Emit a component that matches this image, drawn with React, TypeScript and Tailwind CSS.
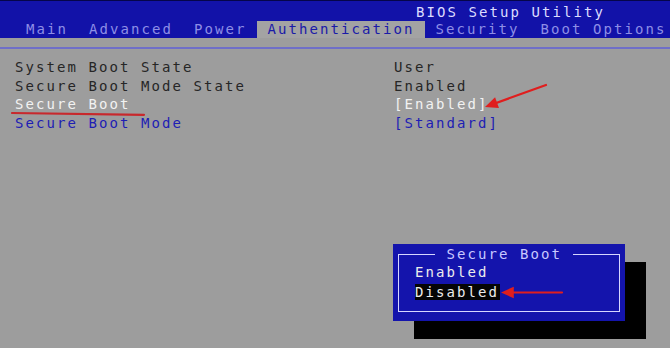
const TABS = ["Main", "Advanced", "Power", "Authentication", "Security", "Boot Options"];
const ACTIVE_TAB = "Authentication";

type Row = { label: string; value: string; tone: "plain" | "selected" | "link" };

const ROWS: Row[] = [
  { label: "System Boot State", value: "User", tone: "plain" },
  { label: "Secure Boot Mode State", value: "Enabled", tone: "plain" },
  { label: "Secure Boot", value: "[Enabled]", tone: "selected" },
  { label: "Secure Boot Mode", value: "[Standard]", tone: "link" },
];

const toneClass = {
  plain: "text-[#262626]",
  selected: "text-[#f2f2f2]",
  link: "text-[#1e1eb4]",
};

function RedArrow({ x1, y1, x2, y2 }: { x1: number; y1: number; x2: number; y2: number }) {
  // line with arrowhead at (x2, y2)
  const ang = Math.atan2(y2 - y1, x2 - x1);
  const len = 14;
  const spread = 0.42;
  const ax = x2 - len * Math.cos(ang - spread);
  const ay = y2 - len * Math.sin(ang - spread);
  const bx = x2 - len * Math.cos(ang + spread);
  const by = y2 - len * Math.sin(ang + spread);
  return (
    <svg className="absolute left-0 top-0 pointer-events-none" width={670} height={348}>
      <line x1={x1} y1={y1} x2={x2 - 6 * Math.cos(ang)} y2={y2 - 6 * Math.sin(ang)} stroke="#e01e1e" strokeWidth={2.2} strokeLinecap="round" />
      <polygon points={`${x2},${y2} ${ax},${ay} ${bx},${by}`} fill="#e01e1e" />
    </svg>
  );
}

export default function App() {
  return (
    <div
      className="relative w-[670px] h-[348px] overflow-hidden bg-[#9d9d9d] text-[14px] tracking-[2.07px]"
      style={{ fontFamily: '"DejaVu Sans Mono", "Liberation Mono", monospace' }}
    >
      {/* Header */}
      <div className="bg-[#1212a8] border-t border-[#05054a]">
        <div className="h-[20px] pt-[2px] pl-[416px] leading-[18px] text-[#dcdcff] whitespace-pre">
          BIOS Setup Utility
        </div>
        <div className="flex h-[17px] pl-[15.5px] leading-[17px] whitespace-pre">
          {TABS.map((tab) => (
            <span
              key={tab}
              className={
                tab === ACTIVE_TAB
                  ? "px-[10.5px] bg-[#a3a3a3] text-[#1a1aa8]"
                  : "px-[10.5px] text-[#8e8ee6]"
              }
            >
              {tab}
            </span>
          ))}
        </div>
      </div>

      {/* Separator */}
      <div className="mt-[9px] h-[2px] bg-[#6f6fc8]" />

      {/* Settings rows */}
      <div className="pt-[9px] pl-[15px] flex flex-col">
        {ROWS.map((row) => (
          <div key={row.label} className="flex h-[18.67px] leading-[18.67px] whitespace-pre">
            <span className={`w-[379px] ${toneClass[row.tone]}`}>{row.label}</span>
            <span className={toneClass[row.tone]}>{row.value}</span>
          </div>
        ))}
      </div>

      {/* Red underline under Secure Boot */}
      <svg className="absolute left-0 top-0 pointer-events-none" width={670} height={348}>
        <path d="M12 113 L144 114.8" stroke="#c8282c" strokeWidth={2.2} strokeLinecap="round" />
      </svg>

      <RedArrow x1={546} y1={85} x2={485} y2={107} />

      {/* Popup */}
      <div className="absolute left-[393px] top-[244px] w-[232px] h-[77px] bg-[#1414ac] shadow-[21px_18px_0_0_#000]">
        <div className="absolute left-[5px] top-[10px] right-[5px] bottom-[9px] border-[1.5px] border-[#d6d6ff]" />
        <div className="relative flex h-[19px] leading-[19px] pt-[1px] pl-[42px] whitespace-pre">
          <span className="bg-[#1414ac] pl-[11.5px] pr-[11px] text-[#c8c8ff]">Secure Boot</span>
        </div>
        <div className="relative pl-[22px] flex flex-col items-start">
          <span className="h-[19px] leading-[19px] text-[#ececec] whitespace-pre">Enabled</span>
          <span className="h-[16px] leading-[16px] mt-[1.5px] bg-[#050505] text-[#ececec] whitespace-pre pr-[1px]">Disabled</span>
        </div>
      </div>

      <RedArrow x1={562} y1={292.5} x2={501} y2={292.5} />
    </div>
  );
}
